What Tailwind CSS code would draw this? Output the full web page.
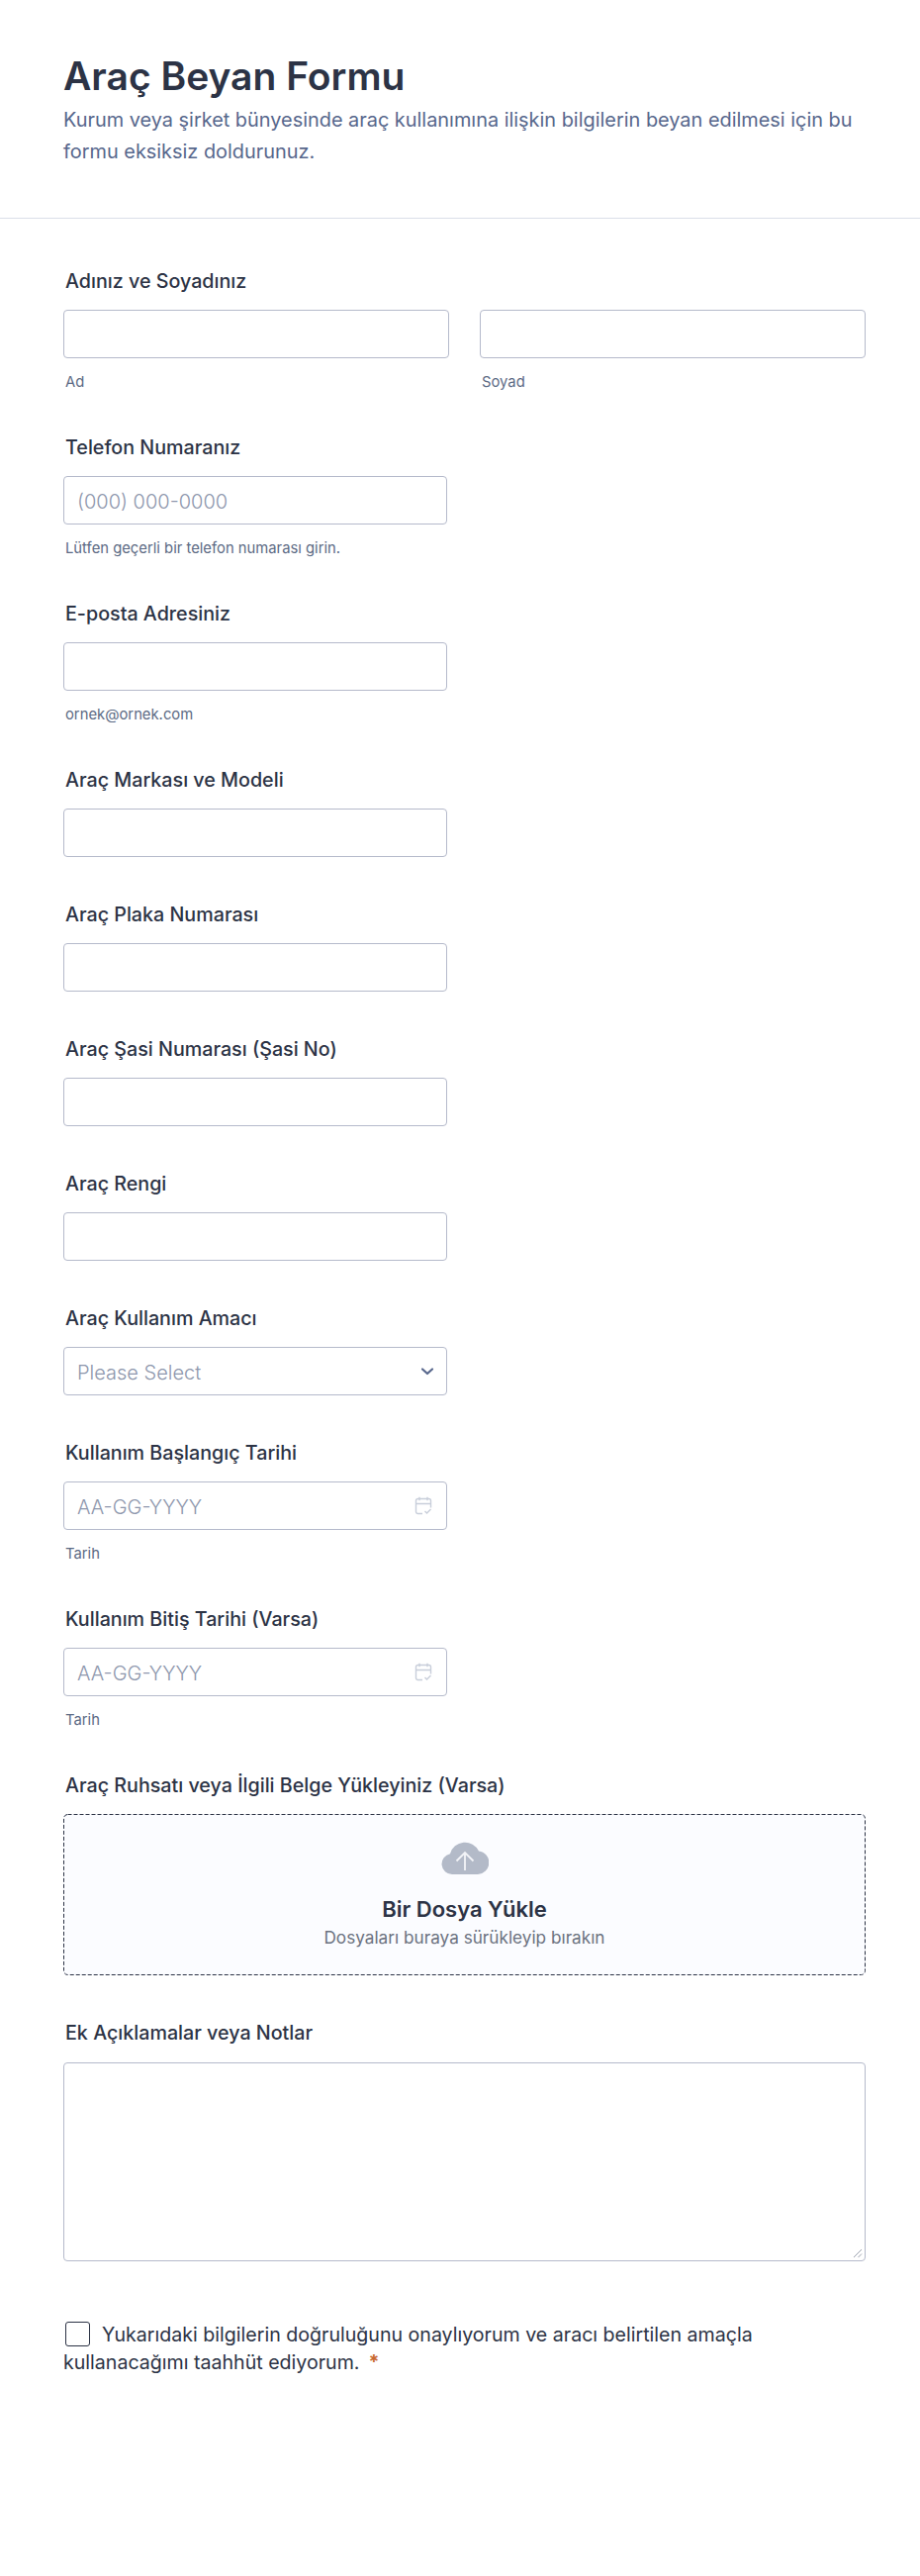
<!DOCTYPE html>
<html lang="tr">
<head>
  <meta charset="UTF-8"/>
  <title>Araç Beyan Formu</title>
  <script src="https://cdn.jsdelivr.net/npm/@tailwindcss/browser@4"></script>
</head>
<body class="bg-white font-['Inter',sans-serif] text-[#2c3345]">

  <!-- Header -->
  <header class="h-[221px] border-b border-[#dadee8] px-[64px] pt-[53px]">
    <h1 class="text-[39px] leading-[48px] font-semibold">Araç Beyan Formu</h1>
    <p class="text-[19.9px] leading-[32px] text-[#57678c] mt-[4px]">Kurum veya şirket bünyesinde araç kullanımına ilişkin bilgilerin beyan edilmesi için bu formu eksiksiz doldurunuz.</p>
  </header>

  <main class="pl-[64px] pr-[55px] pt-[51px]">
    <!-- Ad soyad -->
    <div class="mb-[44px]">
      <label class="block ml-[2px] text-[19.7px] leading-[24px] font-medium mb-[17px]">Adınız ve Soyadınız</label>
      <div class="flex gap-[31px]">
        <div class="w-[390px]">
          <div class="h-[49px] rounded-[4px] border border-[#b5bacb]"></div>
          <p class="ml-[2px] mt-[14px] text-[14.8px] leading-[20px] text-[#5c6a84]">Ad</p>
        </div>
        <div class="w-[390px]">
          <div class="h-[49px] rounded-[4px] border border-[#b5bacb]"></div>
          <p class="ml-[2px] mt-[14px] text-[14.8px] leading-[20px] text-[#5c6a84]">Soyad</p>
        </div>
      </div>
    </div>

    <!-- Telefon -->
    <div class="mb-[44px]">
      <label class="block ml-[2px] text-[19.7px] leading-[24px] font-medium mb-[17px]">Telefon Numaranız</label>
      <div class="w-[388px] h-[49px] rounded-[4px] border border-[#b5bacb] flex items-center pl-[13px] pt-[2px] text-[20px] font-light text-[#8d96ac]">(000) 000-0000</div>
      <p class="ml-[2px] mt-[14px] text-[14.8px] leading-[20px] text-[#5c6a84]">Lütfen geçerli bir telefon numarası girin.</p>
    </div>

    <!-- E-posta -->
    <div class="mb-[44px]">
      <label class="block ml-[2px] text-[19.7px] leading-[24px] font-medium mb-[17px]">E-posta Adresiniz</label>
      <div class="w-[388px] h-[49px] rounded-[4px] border border-[#b5bacb]"></div>
      <p class="ml-[2px] mt-[14px] text-[14.8px] leading-[20px] text-[#5c6a84]">ornek@ornek.com</p>
    </div>

    <div class="mb-[46px]">
      <label class="block ml-[2px] text-[19.7px] leading-[24px] font-medium mb-[17px]">Araç Markası ve Modeli</label>
      <div class="w-[388px] h-[49px] rounded-[4px] border border-[#b5bacb]"></div>
    </div>

    <div class="mb-[46px]">
      <label class="block ml-[2px] text-[19.7px] leading-[24px] font-medium mb-[17px]">Araç Plaka Numarası</label>
      <div class="w-[388px] h-[49px] rounded-[4px] border border-[#b5bacb]"></div>
    </div>

    <div class="mb-[46px]">
      <label class="block ml-[2px] text-[19.7px] leading-[24px] font-medium mb-[17px]">Araç Şasi Numarası (Şasi No)</label>
      <div class="w-[388px] h-[49px] rounded-[4px] border border-[#b5bacb]"></div>
    </div>

    <div class="mb-[46px]">
      <label class="block ml-[2px] text-[19.7px] leading-[24px] font-medium mb-[17px]">Araç Rengi</label>
      <div class="w-[388px] h-[49px] rounded-[4px] border border-[#b5bacb]"></div>
    </div>

    <!-- Select -->
    <div class="mb-[46px]">
      <label class="block ml-[2px] text-[19.7px] leading-[24px] font-medium mb-[17px]">Araç Kullanım Amacı</label>
      <div class="w-[388px] h-[49px] rounded-[4px] border border-[#b5bacb] flex items-center justify-between pl-[13px] pr-[12px] text-[20px] font-light text-[#8d96ac]">
        <span class="pt-[2px]">Please Select</span>
        <svg width="14" height="10" viewBox="0 0 14 10" fill="none"><path d="M2 2.500 L7 7 L12 2.500" stroke="#57678c" stroke-width="2.200" stroke-linecap="round" stroke-linejoin="round"/></svg>
      </div>
    </div>

    <!-- Tarih -->
    <div class="mb-[44px]">
      <label class="block ml-[2px] text-[19.7px] leading-[24px] font-medium mb-[17px]">Kullanım Başlangıç Tarihi</label>
      <div class="w-[388px] h-[49px] rounded-[4px] border border-[#b5bacb] flex items-center justify-between pl-[13px] pr-[14px] text-[20px] font-light text-[#8d96ac]">
        <span class="pt-[2px]">AA-GG-YYYY</span>
        <svg width="18" height="19" viewBox="0 0 18 19" fill="none" stroke="#c8ceda" stroke-width="1.400"><path d="M8 17.500H3.500a2 2 0 0 1-2-2V4.500a2 2 0 0 1 2-2h11a2 2 0 0 1 2 2v7M1.500 7.500h15M5 .8v3.400M13 .8v3.400M10.500 15l2 2 4-4"/></svg>
      </div>
      <p class="ml-[2px] mt-[14px] text-[14.8px] leading-[20px] text-[#5c6a84]">Tarih</p>
    </div>

    <div class="mb-[44px]">
      <label class="block ml-[2px] text-[19.7px] leading-[24px] font-medium mb-[17px]">Kullanım Bitiş Tarihi (Varsa)</label>
      <div class="w-[388px] h-[49px] rounded-[4px] border border-[#b5bacb] flex items-center justify-between pl-[13px] pr-[14px] text-[20px] font-light text-[#8d96ac]">
        <span class="pt-[2px]">AA-GG-YYYY</span>
        <svg width="18" height="19" viewBox="0 0 18 19" fill="none" stroke="#c8ceda" stroke-width="1.400"><path d="M8 17.500H3.500a2 2 0 0 1-2-2V4.500a2 2 0 0 1 2-2h11a2 2 0 0 1 2 2v7M1.500 7.500h15M5 .8v3.400M13 .8v3.400M10.500 15l2 2 4-4"/></svg>
      </div>
      <p class="ml-[2px] mt-[14px] text-[14.8px] leading-[20px] text-[#5c6a84]">Tarih</p>
    </div>

    <!-- Upload -->
    <div class="mb-[46px]">
      <label class="block ml-[2px] text-[19.7px] leading-[24px] font-medium mb-[17px]">Araç Ruhsatı veya İlgili Belge Yükleyiniz (Varsa)</label>
      <div class="relative w-[811px] h-[163px] rounded-[4px] bg-[#fbfcff] flex flex-col items-center pt-[28px]">
        <svg class="absolute inset-0" width="811" height="163" fill="none"><rect x=".5" y=".5" width="810" height="162" rx="4" stroke="#2c3345" stroke-dasharray="4 2"/></svg>
        <svg width="48" height="33" viewBox="0 0 48 33"><path d="M11 33a10.500 10.500 0 0 1-2-20.800A15.500 15.500 0 0 1 38 9.500 11.800 11.800 0 0 1 37 33Z" fill="#b3bac8"/><path d="M24 29V12M15.500 19.500 24 11l8.500 8.500" stroke="#f3f4f8" stroke-width="1.800" fill="none"/></svg>
        <p class="mt-[20px] text-[22px] leading-[30px] font-semibold">Bir Dosya Yükle</p>
        <p class="mt-[2px] text-[17.2px] leading-[24px] text-[#6b7280]">Dosyaları buraya sürükleyip bırakın</p>
      </div>
    </div>

    <!-- Notlar -->
    <div class="mb-[60px]">
      <label class="block ml-[2px] text-[19.7px] leading-[24px] font-medium mb-[18px]">Ek Açıklamalar veya Notlar</label>
      <div class="relative w-[811px] h-[201px] rounded-[4px] border border-[#b5bacb]">
        <svg class="absolute right-[2px] bottom-[2px]" width="10" height="10" viewBox="0 0 10 10" stroke="#9aa0ad" fill="none"><path d="M1 9 9 1M5.500 9 9 5.500"/></svg>
      </div>
    </div>

    <!-- Onay -->
    <p class="w-[811px] text-[19.6px] leading-[28px]">
      <span class="inline-block align-[-5px] ml-[2px] mr-[12px] w-[25px] h-[25px] rounded-[3px] border-[1.5px] border-[#2c3345]"></span>Yukarıdaki bilgilerin doğruluğunu onaylıyorum ve aracı belirtilen amaçla<br/>kullanacağımı taahhüt ediyorum.<span class="ml-[9px] text-[#c8692f] font-bold">*</span>
    </p>
  </main>
</body>
</html>
